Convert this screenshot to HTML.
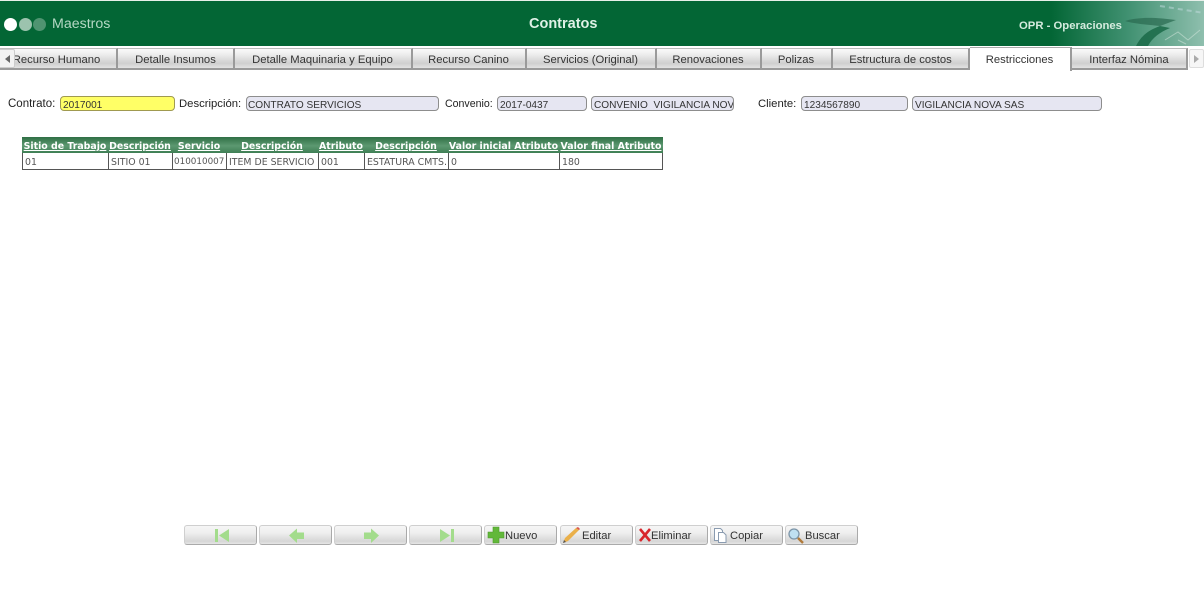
<!DOCTYPE html>
<html><head><meta charset="utf-8">
<style>
html,body{margin:0;padding:0;background:#fff;width:1204px;height:603px;overflow:hidden;font-family:"Liberation Sans",sans-serif}
.a{position:absolute;white-space:nowrap}
#hdr{left:0;top:0;width:1204px;height:46px;background:#036635;border-top:1px solid #e8f0ea;box-sizing:border-box;overflow:hidden}
.dot{position:absolute;border-radius:50%;width:13px;height:13px;top:17px}
.tab{position:absolute;top:48px;height:22px;box-sizing:border-box;border-right:2px solid #9a9a9a;border-bottom:2px solid #9a9a9a;border-top:1px solid #bbb;background:linear-gradient(#fafafa 0,#ececec 30%,#cfcfcf 75%,#e2e2e2 100%);text-align:center;font-size:11.25px;line-height:22px;color:#333}
.lbl{position:absolute;font-size:11.3px;color:#222;top:98px;white-space:nowrap}
.inp{position:absolute;top:96px;height:15px;box-sizing:border-box;border:1px solid #8d8d8d;border-radius:4px;background:#e6e6f2;font-size:10.1px;line-height:17px;padding-left:2px;color:#333;overflow:hidden;white-space:nowrap}
.th,.td{position:absolute;box-sizing:border-box;text-align:center;white-space:nowrap;overflow:hidden}
.th{top:137px;height:16px;font-family:"DejaVu Sans",sans-serif;font-weight:bold;font-size:9.4px;line-height:19px;color:#fff;text-decoration:underline;background:linear-gradient(#2f6f45,#5c9870 55%,#3f7f55)}
.td{top:153px;height:17px;font-family:"DejaVu Sans",sans-serif;font-size:9.4px;line-height:19px;color:#555;text-align:left;padding-left:2px;border-right:1px solid #555;border-bottom:1px solid #555}
.btn{position:absolute;top:525px;width:73px;height:20px;box-sizing:border-box;border:1px solid #cfcfcf;border-right-color:#aaa;border-bottom-color:#aaa;border-radius:3px;background:linear-gradient(#f6f6f6,#eee 40%,#d6d6d6 85%,#e6e6e6);font-size:11.2px;line-height:21px;color:#333}
.btn svg{position:absolute;left:0;top:0}
.btn span{position:absolute;top:0}
</style></head><body>

<div id="hdr" class="a">
<svg width="204" height="46" style="position:absolute;left:1000px;top:-1px" viewBox="0 0 204 46">
<defs><linearGradient id="g" x1="0" x2="1" y1="0" y2="0"><stop offset="0.25" stop-color="#036635"/><stop offset="0.62" stop-color="#3f9070"/><stop offset="1" stop-color="#8fbfae"/></linearGradient></defs>
<rect width="204" height="46" fill="url(#g)"/>
<path d="M125 21C140 16 160 18 176 20L160 26C150 25 135 24 125 21Z" fill="#2a6a50" opacity=".7"/>
<path d="M160 26C146 31 140 38 136 46L148 46C152 38 160 32 170 28Z" fill="#1a6a48" opacity=".85"/>
<path d="M165 40L178 32L188 40L200 30M178 40L186 44" stroke="#d4e6dc" stroke-width="1" fill="none" opacity=".55"/>
<path d="M160 6L204 13" stroke="#c4dce0" stroke-width="2" stroke-dasharray="5 4" opacity=".5"/>
</svg>
<div class="dot" style="left:4px;background:#fff"></div>
<div class="dot" style="left:19px;background:#9cc3ae"></div>
<div class="dot" style="left:33px;background:#4f9471"></div>
<div class="a" style="left:52px;top:15px;font-size:14.2px;color:#b4d8c4">Maestros</div>
<div class="a" style="left:529px;top:15px;font-size:14.5px;font-weight:bold;color:#dff1e6">Contratos</div>
<div class="a" style="left:1019px;top:19px;font-size:11.3px;font-weight:bold;color:#d5ebde">OPR - Operaciones</div>
</div>

<div class="tab" style="left:0;width:118px;text-indent:-3px">Recurso Humano</div>
<div class="tab" style="left:118px;width:117px">Detalle Insumos</div>
<div class="tab" style="left:235px;width:178px;text-indent:-1px">Detalle Maquinaria y Equipo</div>
<div class="tab" style="left:413px;width:114px;text-indent:-1px">Recurso Canino</div>
<div class="tab" style="left:527px;width:130px;text-indent:-1px">Servicios (Original)</div>
<div class="tab" style="left:657px;width:105px;text-indent:-1px">Renovaciones</div>
<div class="tab" style="left:762px;width:71px;text-indent:-1px">Polizas</div>
<div class="tab" style="left:833px;width:137px">Estructura de costos</div>
<div class="tab" style="left:970px;top:47px;height:24px;width:102px;background:#fff;border-bottom:0;border-top:1px solid #aaa;border-right:2px solid #9a9a9a;line-height:24px;text-indent:-1px">Restricciones</div>
<div class="tab" style="left:1072px;width:116px">Interfaz Nómina</div>

<div class="a" style="left:0;top:49px;width:15px;height:19px;background:#f2f2f2;border:1px solid #ccc;border-left:0;box-sizing:border-box;border-radius:0 2px 2px 0"></div>
<svg class="a" style="left:5px;top:55px" width="6" height="8"><path d="M5 0V8L0 4Z" fill="#666"/></svg>
<div class="a" style="left:1189px;top:49px;width:15px;height:19px;background:#f6f6f6;border:1px solid #ddd;box-sizing:border-box;border-radius:2px"></div>
<svg class="a" style="left:1194px;top:55px" width="6" height="8"><path d="M0 0V8L5 4Z" fill="#aaa"/></svg>

<div class="lbl" style="left:8px;font-size:11.5px">Contrato:</div>
<div class="inp" style="left:60px;width:115px;background:#ffff66;border-color:#a09a50">2017001</div>
<div class="lbl" style="left:179px">Descripción:</div>
<div class="inp" style="left:246px;width:193px;padding-left:1px">CONTRATO SERVICIOS</div>
<div class="lbl" style="left:445px;font-size:10.6px;top:98px">Convenio:</div>
<div class="inp" style="left:497px;width:90px">2017-0437</div>
<div class="inp" style="left:591px;width:143px">CONVENIO&nbsp; VIGILANCIA NOVA SAS</div>
<div class="lbl" style="left:758px">Cliente:</div>
<div class="inp" style="left:801px;width:107px">1234567890</div>
<div class="inp" style="left:912px;width:190px">VIGILANCIA NOVA SAS</div>

<div class="th" style="left:22px;width:86px">Sitio de Trabajo</div>
<div class="th" style="left:108px;width:64px">Descripción</div>
<div class="th" style="left:172px;width:54px">Servicio</div>
<div class="th" style="left:226px;width:92px">Descripción</div>
<div class="th" style="left:318px;width:46px">Atributo</div>
<div class="th" style="left:364px;width:84px">Descripción</div>
<div class="th" style="left:448px;width:111px">Valor inicial Atributo</div>
<div class="th" style="left:559px;width:104px">Valor final Atributo</div>

<div class="td" style="left:22px;width:87px;border-left:1px solid #555">01</div>
<div class="td" style="left:109px;width:64px">SITIO 01</div>
<div class="td" style="left:173px;width:54px;padding-left:1px;font-size:8.8px">010010007</div>
<div class="td" style="left:227px;width:92px;padding-left:2px">ITEM DE SERVICIO</div>
<div class="td" style="left:319px;width:46px">001</div>
<div class="td" style="left:365px;width:84px;padding-left:2px">ESTATURA CMTS.</div>
<div class="td" style="left:449px;width:111px">0</div>
<div class="td" style="left:560px;width:103px">180</div>

<div class="btn" style="left:184px"><svg width="72" height="18"><path d="M30 3h3v13h-3zM44 3v13l-10-6.500z" fill="#a3dc8c"/></svg></div>
<div class="btn" style="left:259px"><svg width="72" height="18"><path d="M29 9.500l8-7v4h7v6.500h-7v4z" fill="#a3dc8c"/></svg></div>
<div class="btn" style="left:334px"><svg width="72" height="18"><path d="M44 9.500l-8-7v4h-7v6.500h7v4z" fill="#a3dc8c"/></svg></div>
<div class="btn" style="left:409px"><svg width="72" height="18"><path d="M30 3v13l10-6.500zM41 3h3v13h-3z" fill="#a3dc8c"/></svg></div>
<div class="btn" style="left:484px"><svg width="20" height="18"><path d="M8 1h6v5h5v6h-5v5H8v-5H3V6h5z" fill="#62b83a" stroke="#4c9a2a" stroke-width=".6"/></svg><span style="left:20px">Nuevo</span></div>
<div class="btn" style="left:560px"><svg width="20" height="18"><path d="M2 17l2-5L15 2l3 2L7 15z" fill="#eab04a"/><path d="M2 17l1-3 2 2z" fill="#555"/><path d="M15 2l2-1 2 2-1 1z" fill="#d9534a"/></svg><span style="left:21px">Editar</span></div>
<div class="btn" style="left:635px"><svg width="20" height="18"><path d="M4 3l10 12M14 3L4 15" stroke="#d8262c" stroke-width="2.600" fill="none"/></svg><span style="left:15px">Eliminar</span></div>
<div class="btn" style="left:710px"><svg width="20" height="18"><path d="M3.500 2.500h6l2 2v10h-8z" fill="#fff" stroke="#8a9bb0"/><path d="M7.500 6.500h5l2.500 2.500v7.500h-7.500z" fill="#fff" stroke="#8a9bb0"/></svg><span style="left:19px">Copiar</span></div>
<div class="btn" style="left:785px"><svg width="20" height="18"><circle cx="8" cy="8" r="5" fill="#bfe0f2" stroke="#7d95a8" stroke-width="1.300"/><path d="M12 12l5 5" stroke="#b07a3a" stroke-width="2.400"/></svg><span style="left:19px">Buscar</span></div>

</body></html>
